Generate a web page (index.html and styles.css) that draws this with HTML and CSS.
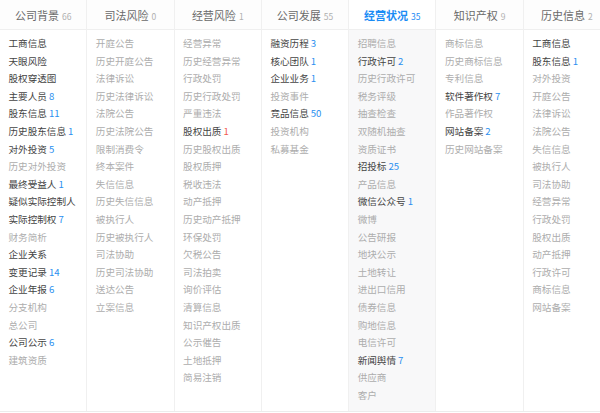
FILE: index.html
```html
<!DOCTYPE html>
<html lang="zh">
<head>
<meta charset="utf-8">
<link rel="stylesheet" href="styles.css">
</head>
<body>
<div class="board">
  <div class="col">
    <div class="head">公司背景<span class="hc">66</span></div>
    <ul class="list">
      <li class="on">工商信息</li>
      <li class="on">天眼风险</li>
      <li class="on">股权穿透图</li>
      <li class="on">主要人员<span class="n">8</span></li>
      <li class="on">股东信息<span class="n">11</span></li>
      <li class="on">历史股东信息<span class="n">1</span></li>
      <li class="on">对外投资<span class="n">5</span></li>
      <li>历史对外投资</li>
      <li class="on">最终受益人<span class="n">1</span></li>
      <li class="on">疑似实际控制人</li>
      <li class="on">实际控制权<span class="n">7</span></li>
      <li>财务简析</li>
      <li class="on">企业关系</li>
      <li class="on">变更记录<span class="n">14</span></li>
      <li class="on">企业年报<span class="n">6</span></li>
      <li>分支机构</li>
      <li>总公司</li>
      <li class="on">公司公示<span class="n">6</span></li>
      <li>建筑资质</li>
    </ul>
  </div>
  <div class="col">
    <div class="head">司法风险<span class="hc">0</span></div>
    <ul class="list">
      <li>开庭公告</li>
      <li>历史开庭公告</li>
      <li>法律诉讼</li>
      <li>历史法律诉讼</li>
      <li>法院公告</li>
      <li>历史法院公告</li>
      <li>限制消费令</li>
      <li>终本案件</li>
      <li>失信信息</li>
      <li>历史失信信息</li>
      <li>被执行人</li>
      <li>历史被执行人</li>
      <li>司法协助</li>
      <li>历史司法协助</li>
      <li>送达公告</li>
      <li>立案信息</li>
    </ul>
  </div>
  <div class="col">
    <div class="head">经营风险<span class="hc">1</span></div>
    <ul class="list">
      <li>经营异常</li>
      <li>历史经营异常</li>
      <li>行政处罚</li>
      <li>历史行政处罚</li>
      <li>严重违法</li>
      <li class="on">股权出质<span class="n red">1</span></li>
      <li>历史股权出质</li>
      <li>股权质押</li>
      <li>税收违法</li>
      <li>动产抵押</li>
      <li>历史动产抵押</li>
      <li>环保处罚</li>
      <li>欠税公告</li>
      <li>司法拍卖</li>
      <li>询价评估</li>
      <li>清算信息</li>
      <li>知识产权出质</li>
      <li>公示催告</li>
      <li>土地抵押</li>
      <li>简易注销</li>
    </ul>
  </div>
  <div class="col">
    <div class="head">公司发展<span class="hc">55</span></div>
    <ul class="list">
      <li class="on">融资历程<span class="n">3</span></li>
      <li class="on">核心团队<span class="n">1</span></li>
      <li class="on">企业业务<span class="n">1</span></li>
      <li>投资事件</li>
      <li class="on">竞品信息<span class="n">50</span></li>
      <li>投资机构</li>
      <li>私募基金</li>
    </ul>
  </div>
  <div class="col active">
    <div class="head">经营状况<span class="hc">35</span></div>
    <ul class="list">
      <li>招聘信息</li>
      <li class="on">行政许可<span class="n">2</span></li>
      <li>历史行政许可</li>
      <li>税务评级</li>
      <li>抽查检查</li>
      <li>双随机抽查</li>
      <li>资质证书</li>
      <li class="on">招投标<span class="n">25</span></li>
      <li>产品信息</li>
      <li class="on">微信公众号<span class="n">1</span></li>
      <li>微博</li>
      <li>公告研报</li>
      <li>地块公示</li>
      <li>土地转让</li>
      <li>进出口信用</li>
      <li>债券信息</li>
      <li>购地信息</li>
      <li>电信许可</li>
      <li class="on">新闻舆情<span class="n">7</span></li>
      <li>供应商</li>
      <li>客户</li>
    </ul>
  </div>
  <div class="col">
    <div class="head">知识产权<span class="hc">9</span></div>
    <ul class="list">
      <li>商标信息</li>
      <li>历史商标信息</li>
      <li>专利信息</li>
      <li class="on">软件著作权<span class="n">7</span></li>
      <li>作品著作权</li>
      <li class="on">网站备案<span class="n">2</span></li>
      <li>历史网站备案</li>
    </ul>
  </div>
  <div class="col">
    <div class="head">历史信息<span class="hc">2</span></div>
    <ul class="list">
      <li class="on">工商信息</li>
      <li class="on">股东信息<span class="n">1</span></li>
      <li>对外投资</li>
      <li>开庭公告</li>
      <li>法律诉讼</li>
      <li>法院公告</li>
      <li>失信信息</li>
      <li>被执行人</li>
      <li>司法协助</li>
      <li>经营异常</li>
      <li>行政处罚</li>
      <li>股权出质</li>
      <li>动产抵押</li>
      <li>行政许可</li>
      <li>商标信息</li>
      <li>网站备案</li>
    </ul>
  </div>
</div>
</body>
</html>
```

FILE: styles.css
```css
html, body {
  margin: 0;
  padding: 0;
  background: #fff;
  overflow: hidden;
}
body {
  font-family: "Noto Sans CJK SC", "Microsoft YaHei", sans-serif;
  width: 600px;
  height: 413px;
}
.board {
  display: grid;
  grid-template-columns: repeat(7, 87.3px);
  width: 611px;
  height: 411px;
  border-bottom: 1px solid #ececec;
}
.col {
  border-right: 1px solid #f0f0f0;
  display: flex;
  flex-direction: column;
}
.head {
  height: 30px;
  line-height: 30px;
  text-align: center;
  font-size: 11px;
  color: #6a6a6a;
  border-bottom: 1px solid #efefef;
  background: #fdfdfd;
  box-sizing: border-box;
}
.hc {
  font-size: 8.5px;
  color: #b0b0b0;
  margin-left: 3px;
}
.active {
  background: #f8f8f9;
}
.active .head {
  background: #fff;
  color: #1a8cf5;
  font-weight: bold;
}
.active .head .hc {
  color: #1a8cf5;
  font-weight: normal;
}
.list {
  list-style: none;
  margin: 0;
  padding: 5px 0 0 8.5px;
}
.list li {
  font-size: 9.6px;
  line-height: 17.6px;
  height: 17.6px;
  color: #adadad;
  white-space: nowrap;
}
.list li.on {
  color: #444;
}
.n {
  color: #2b8ff0;
  margin-left: 2px;
}
.n.red {
  color: #f25b4e;
}
```
